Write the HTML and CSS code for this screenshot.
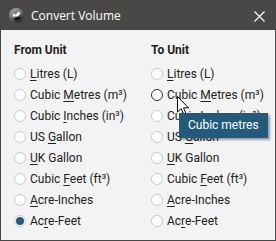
FILE: index.html
```html
<!DOCTYPE html>
<html lang="en">
<head>
    <meta charset="UTF-8">
    <title>Convert Volume</title>
    <link rel="stylesheet" href="styles.css">
</head>
<body>
    <div class="window">
        <header class="titlebar">
            <svg class="app-icon" width="15" height="15" viewBox="0 0 15 15">
                <defs>
                    <linearGradient id="logoShade" x1="0" y1="0" x2="0.6" y2="1">
                        <stop offset="0" stop-color="#b9b9b9"/>
                        <stop offset="0.55" stop-color="#6b6b6b"/>
                        <stop offset="1" stop-color="#2b2b2b"/>
                    </linearGradient>
                </defs>
                <circle cx="7.5" cy="7.5" r="7.5" fill="url(#logoShade)"/>
                <path d="M3 8.5 L5 5 L6.5 7 L9.5 3.5 L11.5 5.5 L8.5 8.5 Z" fill="#ffffff"/>
                <path d="M5 11 C7 9 9.5 8.5 12 9 C11.5 11.5 9 13 6.5 12.5 Z" fill="#111111"/>
            </svg>
            <span class="title">Convert Volume</span>
            <svg class="close-btn" width="11" height="11" viewBox="0 0 11 11">
                <path d="M0.5 0.5 L10.5 10.5 M10.5 0.5 L0.5 10.5" stroke="#ffffff" stroke-width="1.2"/>
            </svg>
        </header>

        <main class="content">
            <section class="group">
                <h2 class="group-title">From Unit</h2>
                <ul class="options">
                    <li class="option"><span class="radio"></span><span><u>L</u>itres (L)</span></li>
                    <li class="option"><span class="radio"></span><span>Cubic <u>M</u>etres (m³)</span></li>
                    <li class="option"><span class="radio"></span><span>Cubic <u>I</u>nches (in³)</span></li>
                    <li class="option"><span class="radio"></span><span>US <u>G</u>allon</span></li>
                    <li class="option"><span class="radio"></span><span><u>U</u>K Gallon</span></li>
                    <li class="option"><span class="radio"></span><span>Cubic <u>F</u>eet (ft³)</span></li>
                    <li class="option"><span class="radio"></span><span><u>A</u>cre-Inches</span></li>
                    <li class="option"><span class="radio checked"></span><span>Ac<u>r</u>e-Feet</span></li>
                </ul>
            </section>
            <section class="group">
                <h2 class="group-title">To Unit</h2>
                <ul class="options">
                    <li class="option"><span class="radio"></span><span><u>L</u>itres (L)</span></li>
                    <li class="option"><span class="radio hover"></span><span>Cubic <u>M</u>etres (m³)</span></li>
                    <li class="option"><span class="radio"></span><span>Cubic <u>I</u>nches (in³)</span></li>
                    <li class="option"><span class="radio"></span><span>US <u>G</u>allon</span></li>
                    <li class="option"><span class="radio"></span><span><u>U</u>K Gallon</span></li>
                    <li class="option"><span class="radio"></span><span>Cubic <u>F</u>eet (ft³)</span></li>
                    <li class="option"><span class="radio"></span><span><u>A</u>cre-Inches</span></li>
                    <li class="option"><span class="radio"></span><span>Ac<u>r</u>e-Feet</span></li>
                </ul>
            </section>
        </main>

        <svg class="cursor" width="13" height="20" viewBox="0 0 13 20">
            <path d="M0.5 0.5 L0.5 16 L4.2 12.6 L6.8 18.6 L9 17.6 L6.5 11.8 L11.5 11.8 Z" fill="#ffffff" stroke="#000000" stroke-width="1"/>
        </svg>
        <div class="tooltip">Cubic metres</div>
    </div>
</body>
</html>
```

FILE: styles.css
```css
:root {
    --frame-color: #4a4846;
    --panel-color: #f3f3f3;
    --text-color: #222222;
    --radio-border: #c9c9c9;
    --accent-color: #235a7c;
}

* {
    margin: 0;
    padding: 0;
    box-sizing: border-box;
}

body {
    font-family: Roboto, "Liberation Sans", sans-serif;
    font-size: 12px;
    color: var(--text-color);
    background: var(--panel-color);
}

.window {
    position: relative;
    width: 276px;
    height: 241px;
    border: 1px solid var(--frame-color);
    background: var(--panel-color);
    display: flex;
    flex-direction: column;
}

.titlebar {
    height: 29px;
    flex-shrink: 0;
    background: var(--frame-color);
    display: flex;
    align-items: center;
    padding: 0 10px 0 8px;
}

.app-icon {
    margin-right: 7px;
}

.title {
    font-family: "Open Sans", "Noto Sans", sans-serif;
    font-size: 12px;
    color: #ffffff;
    line-height: 16px;
}

.close-btn {
    margin-left: auto;
    margin-top: 1px;
}

.content {
    display: grid;
    grid-template-columns: 137px 1fr;
    padding: 13px 0 0 12px;
}

.group-title {
    font-size: 12px;
    font-weight: bold;
    line-height: 14px;
    margin-bottom: 7px;
    padding-left: 1px;
}

.options {
    list-style: none;
}

.option {
    display: flex;
    align-items: flex-start;
    height: 21px;
    line-height: 21px;
    white-space: nowrap;
}

.option u {
    text-underline-offset: 2px;
}

.radio {
    width: 12px;
    height: 12px;
    margin: 4px 4px 0 1px;
    border: 1px solid var(--radio-border);
    border-radius: 50%;
    background: #ffffff;
    flex-shrink: 0;
    display: flex;
    align-items: center;
    justify-content: center;
}

.radio.hover {
    border-color: #333333;
}

.radio.checked::after {
    content: "";
    width: 8px;
    height: 8px;
    border-radius: 50%;
    background: var(--accent-color);
}

.tooltip {
    position: absolute;
    left: 178px;
    top: 112px;
    width: 89px;
    height: 25px;
    padding-left: 9px;
    line-height: 25px;
    color: #ffffff;
    background: var(--accent-color);
    box-shadow: 2px 2px 2px rgba(0, 0, 0, 0.35);
}

.cursor {
    position: absolute;
    left: 176px;
    top: 95px;
}
```
